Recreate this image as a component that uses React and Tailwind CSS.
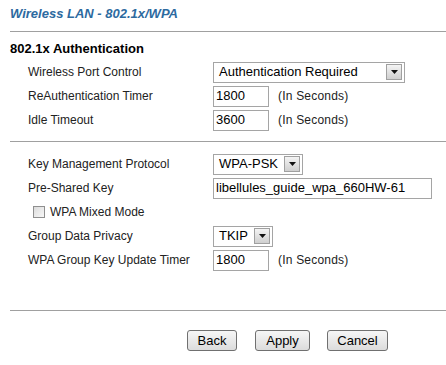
import React from "react";

const Arrow = () => (
  <div className="w-[16px] h-[16px] border border-[#a0a0a0] bg-gradient-to-b from-[#f4f4f4] to-[#cfcfcf] flex items-center justify-center">
    <svg width="7" height="4" viewBox="0 0 7 4"><path d="M0 0 H7 L3.5 4 Z" fill="#111" /></svg>
  </div>
);

const Select = ({ w, text }) => (
  <div className={`${w} h-[21px] border border-[#a5a5a5] bg-white flex items-center justify-between pl-[5px] pr-[2px] text-[13px] text-black`}>
    <span className="leading-[16px]">{text}</span>
    <Arrow />
  </div>
);

const Input = ({ w, value }) => (
  <div className={`${w} h-[21px] border border-[#a5a5a5] bg-white flex items-center pl-[2px] text-[13px] text-black`}>
    <span className="leading-[16px]">{value}</span>
  </div>
);

const Row = ({ label, children }) => (
  <div className="h-[24px] flex items-center">
    <div className="w-[213px] pl-[28px] text-[12px] text-[#222]">{label}</div>
    <div className="flex items-center">{children}</div>
  </div>
);

const Secs = () => <span className="ml-[9px] text-[12px] text-[#222] tracking-[0.2px]">(In Seconds)</span>;

const Btn = ({ w, children, ml }) => (
  <button className={`${w} ${ml} h-[21px] rounded-[3px] border border-[#707070] bg-gradient-to-b from-[#f6f6f6] to-[#dcdcdc] text-[13px] text-black leading-[16px] flex items-center justify-center`}>
    {children}
  </button>
);

export default function App() {
  return (
    <div className="w-[446px] h-[365px] bg-white overflow-hidden" style={{ fontFamily: '"Liberation Sans", Arial, sans-serif' }}>
      <div className="h-[31px] pt-[6px] pl-[10px] leading-[16px] text-[13px] font-bold italic text-[#2d6a9f]">Wireless LAN - 802.1x/WPA</div>
      <div className="ml-[10px] h-px bg-[#a0a0a0]" />
      <div className="h-[28px] pt-[9px] pl-[10px] leading-[16px] text-[13px] font-bold text-black">802.1x Authentication</div>
      <Row label="Wireless Port Control"><Select w="w-[192px]" text="Authentication Required" /></Row>
      <Row label="ReAuthentication Timer"><Input w="w-[56px]" value="1800" /><Secs /></Row>
      <Row label="Idle Timeout"><Input w="w-[56px]" value="3600" /><Secs /></Row>
      <div className="h-[9px]" />
      <div className="ml-[10px] h-px bg-[#a0a0a0]" />
      <div className="h-[10px]" />
      <Row label="Key Management Protocol"><Select w="w-[90px]" text="WPA-PSK" /></Row>
      <Row label="Pre-Shared Key"><Input w="w-[219px]" value="libellules_guide_wpa_660HW-61" /></Row>
      <div className="h-[24px] flex items-center pl-[33px]">
        <div className="w-[12px] h-[12px] border border-[#8f8f8f] bg-gradient-to-br from-[#dcdcdc] to-[#f8f8f8]" />
        <span className="ml-[5px] text-[12px] text-[#222]">WPA Mixed Mode</span>
      </div>
      <Row label="Group Data Privacy"><Select w="w-[60px]" text="TKIP" /></Row>
      <Row label="WPA Group Key Update Timer"><Input w="w-[56px]" value="1800" /><Secs /></Row>
      <div className="h-[38px]" />
      <div className="ml-[10px] h-px bg-[#a0a0a0]" />
      <div className="h-[19px]" />
      <div className="flex">
        <Btn w="w-[50px]" ml="ml-[187px]">Back</Btn>
        <Btn w="w-[55px]" ml="ml-[18px]">Apply</Btn>
        <Btn w="w-[61px]" ml="ml-[17px]">Cancel</Btn>
      </div>
    </div>
  );
}
